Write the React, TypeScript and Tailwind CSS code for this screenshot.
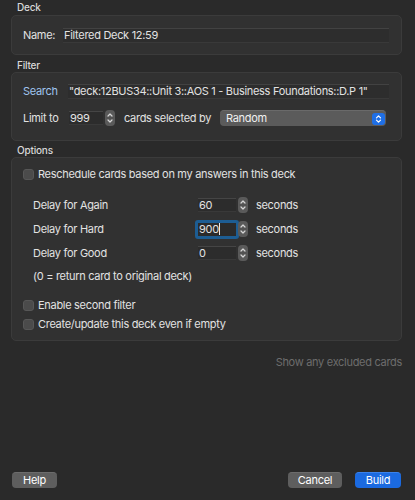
import React from "react";

function Stepper() {
  return (
    <div className="w-[10px] h-[16px] rounded-[4px] bg-[#5a5a5a] flex items-center justify-center shrink-0">
      <svg width="10" height="16" viewBox="0 0 10 16">
        <path d="M3 6 L5 4 L7 6" fill="none" stroke="#d6d6d6" strokeWidth="1.2" strokeLinecap="round" strokeLinejoin="round" />
        <line x1="1.5" y1="8" x2="8.5" y2="8" stroke="#4a4a4a" strokeWidth="0.8" />
        <path d="M3 10 L5 12 L7 10" fill="none" stroke="#d6d6d6" strokeWidth="1.2" strokeLinecap="round" strokeLinejoin="round" />
      </svg>
    </div>
  );
}

function Checkbox() {
  return <div className="w-[11px] h-[11px] rounded-[3px] bg-[#4b4b4b] border border-[#575757] shrink-0" />;
}

function Field({ value, w, focus }: { value: string; w: string; focus?: boolean }) {
  if (focus) {
    return (
      <div className="rounded-[3px] border-[3px] border-[#1d5d93] -mx-[3px]">
        <div className={`${w} h-[13px] bg-[#2b2b2b] flex items-center leading-[13px] pl-[1px]`}>
          <span>{value}</span>
          <span className="w-px h-[12px] bg-[#e8e8e8]" />
        </div>
      </div>
    );
  }
  return (
    <div className={`${w} h-[14px] bg-[#2c2c2c] border-t border-[#454545] border-b border-b-[#393939] flex items-center leading-[13px] pl-[1px]`}>
      {value}
    </div>
  );
}

function DelayRow({ label, value, focus }: { label: string; value: string; focus?: boolean }) {
  return (
    <div className="h-[24px] flex items-center pl-[21px]">
      <div className="w-[165px]">{label}</div>
      <Field value={value} w="w-[38px]" focus={focus} />
      <div className="ml-[2px]">
        <Stepper />
      </div>
      <div className="ml-[8px]">seconds</div>
    </div>
  );
}

export default function App() {
  return (
    <div className="w-[415px] h-[500px] bg-[#2a2a2a] text-[#e2e2e2] font-['Inter',sans-serif] text-[11px] tracking-[-0.3px] flex flex-col pl-[11px] pr-[13px] overflow-hidden">
      <div className="h-[15px] pl-[6px] text-[10px] font-medium leading-[15px] text-[#d8d8d8] tracking-[-0.2px]">Deck</div>
      <div className="h-[40px] rounded-[5px] border border-[#3b3b3b] bg-[#313131] flex items-center pl-[11px] pr-[12px]">
        <div className="w-[40px]">Name:</div>
        <div className="flex-1 h-[15px] bg-[#2d2d2d] border-t border-[#424242] border-b border-b-[#393939] flex items-center pl-[1px]">
          Filtered Deck 12:59
        </div>
      </div>

      <div className="h-[17px] pt-[3px] pl-[6px] text-[10px] font-medium leading-[14px] text-[#d8d8d8] tracking-[-0.2px]">Filter</div>
      <div className="h-[69px] rounded-[5px] border border-[#3b3b3b] bg-[#313131] flex flex-col pt-[10px] pl-[11px] pr-[12px] gap-[11px]">
        <div className="h-[16px] flex items-center">
          <div className="w-[45px] text-[#9fc4ef]">Search</div>
          <div className="flex-1 h-[15px] bg-[#2d2d2d] border-t border-[#424242] border-b border-b-[#393939] flex items-center pl-[1px] whitespace-nowrap overflow-hidden">
            "deck:12BUS34::Unit 3::AOS 1 - Business Foundations::D.P 1"
          </div>
        </div>
        <div className="h-[16px] flex items-center">
          <div className="w-[46px]">Limit to</div>
          <Field value="999" w="w-[34px]" />
          <div className="ml-[2px]">
            <Stepper />
          </div>
          <div className="ml-[9px]">cards selected by</div>
          <div className="ml-auto mr-[3px] w-[166px] h-[16px] rounded-[4px] bg-[#5b5b5b] border-t border-[#6a6a6a] flex items-center pl-[6px] pr-[1px] text-[#f0f0f0]">
            <span>Random</span>
            <div className="ml-auto w-[13px] h-[12px] rounded-[3px] bg-[#1f6fe6] flex items-center justify-center">
              <svg width="13" height="12" viewBox="0 0 13 12">
                <path d="M4.5 4.8 L6.5 2.8 L8.5 4.8" fill="none" stroke="#ffffff" strokeWidth="1.2" strokeLinecap="round" strokeLinejoin="round" />
                <path d="M4.5 7.2 L6.5 9.2 L8.5 7.2" fill="none" stroke="#ffffff" strokeWidth="1.2" strokeLinecap="round" strokeLinejoin="round" />
              </svg>
            </div>
          </div>
        </div>
      </div>

      <div className="h-[16px] pt-[2px] pl-[6px] text-[10px] font-medium leading-[14px] text-[#d8d8d8] tracking-[-0.2px]">Options</div>
      <div className="h-[184px] rounded-[5px] border border-[#3b3b3b] bg-[#313131] flex flex-col pt-[8px] pl-[11px] pr-[12px]">
        <div className="h-[16px] flex items-center gap-[4px]">
          <Checkbox />
          <span>Reschedule cards based on my answers in this deck</span>
        </div>
        <div className="mt-[11px] -ml-[11px]">
          <DelayRow label="Delay for Again" value="60" />
          <DelayRow label="Delay for Hard" value="900" focus />
          <DelayRow label="Delay for Good" value="0" />
        </div>
        <div className="h-[22px] flex items-center pl-[10px]">(0 = return card to original deck)</div>
        <div className="mt-[10px] h-[16px] flex items-center gap-[4px]">
          <Checkbox />
          <span>Enable second filter</span>
        </div>
        <div className="mt-[3px] h-[16px] flex items-center gap-[4px]">
          <Checkbox />
          <span>Create/update this deck even if empty</span>
        </div>
      </div>

      <div className="mt-[13px] h-[16px] flex items-center justify-end text-[#6d6d6d]">Show any excluded cards</div>

      <div className="flex-1" />
      <div className="h-[16px] mb-[12px] flex items-center">
        <div className="ml-[1px] w-[45px] h-[16px] rounded-[4px] bg-[#5e5e5e] border-t border-[#6c6c6c] flex items-center justify-center text-white">Help</div>
        <div className="ml-auto w-[54px] h-[16px] rounded-[4px] bg-[#5e5e5e] border-t border-[#6c6c6c] flex items-center justify-center text-white">Cancel</div>
        <div className="ml-[13px] mr-[1px] w-[46px] h-[16px] rounded-[4px] bg-[#1b6ae0] border-t border-[#3a82ec] flex items-center justify-center text-white">Build</div>
      </div>
    </div>
  );
}
